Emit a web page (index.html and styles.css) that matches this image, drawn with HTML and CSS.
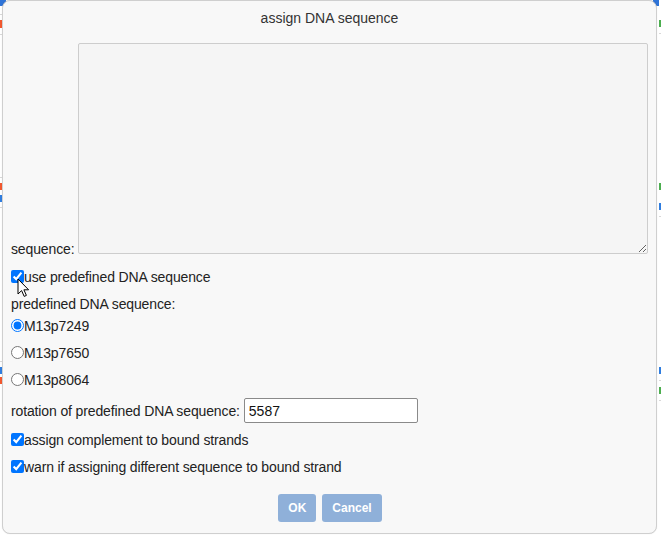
FILE: index.html
```html
<!DOCTYPE html>
<html>
<head>
<meta charset="utf-8">
<link rel="stylesheet" href="styles.css">
</head>
<body>
<div class="desk">
  <div class="bit gray-line" style="left:0;top:14px"></div>
  <div class="bit red" style="left:0;top:20px;height:8px"></div>
  <div class="bit gray-line" style="left:0;top:34px"></div>
  <div class="bit gray-line" style="left:0;top:177px"></div>
  <div class="bit red" style="left:0;top:183px;height:7px"></div>
  <div class="bit blue" style="left:0;top:195px;height:7px"></div>
  <div class="bit gray-line" style="left:0;top:207px"></div>
  <div class="bit gray-line" style="left:0;top:361px"></div>
  <div class="bit blue" style="left:0;top:367px;height:7px"></div>
  <div class="bit red" style="left:0;top:377px;height:7px"></div>
  <div class="bit green" style="right:0;top:20px;height:7px"></div>
  <div class="bit gray-line" style="right:0;top:33px"></div>
  <div class="bit green" style="right:0;top:183px;height:7px"></div>
  <div class="bit blue" style="right:0;top:203px;height:7px"></div>
  <div class="bit gray-line" style="right:0;top:216px"></div>
  <div class="bit blue" style="right:0;top:367px;height:7px"></div>
  <div class="bit gray-line" style="right:0;top:380px"></div>
  <div class="bit green" style="right:0;top:387px;height:7px"></div>
  <div class="bit gray-line" style="right:0;top:400px"></div>
  <div class="corner tl"></div>
  <div class="corner tr"></div>

  <div class="dialog">
    <div class="title">assign DNA sequence</div>
    <div class="seq-row">
      <label class="seq-label">sequence:</label>
      <textarea class="seq-area"></textarea>
    </div>
    <label class="row check-row first"><input type="checkbox" checked>use predefined DNA sequence</label>
    <div class="sub-label">predefined DNA sequence:</div>
    <label class="row radio-row"><input type="radio" name="seq" checked>M13p7249</label>
    <label class="row radio-row"><input type="radio" name="seq">M13p7650</label>
    <label class="row radio-row"><input type="radio" name="seq">M13p8064</label>
    <label class="row rot-row">rotation of predefined DNA sequence: <input class="rot-input" type="text" value="5587"></label>
    <label class="row check-row tight"><input type="checkbox" checked>assign complement to bound strands</label>
    <label class="row check-row"><input type="checkbox" checked>warn if assigning different sequence to bound strand</label>
    <div class="buttons">
      <button class="btn">OK</button>
      <button class="btn">Cancel</button>
    </div>
  </div>

  <svg class="cursor" width="14" height="20" viewBox="0 0 14 20">
    <path d="M1 1 L1 16 L4.6 12.6 L7.2 18.4 L9.4 17.4 L6.9 11.8 L11.6 11.8 Z" fill="#fff" stroke="#000" stroke-width="1" stroke-linejoin="round"/>
  </svg>
</div>
</body>
</html>
```

FILE: styles.css
```css
html, body {
  margin: 0;
  padding: 0;
  background: #fff;
}
.desk {
  position: relative;
  width: 661px;
  height: 536px;
  overflow: hidden;
  font-family: "Liberation Sans", Arial, sans-serif;
  font-size: 14px;
  color: #222;
}
.bit {
  position: absolute;
  width: 2px;
}
.gray-line { height: 1px; background: #d8d8d8; }
.red { background: #f2582e; }
.blue { background: #2f7ddf; }
.green { background: #4cae4f; }
.corner {
  position: absolute;
  top: 0;
  width: 6px;
  height: 6px;
  background: #2f74d8;
}
.corner.tl { left: 0; }
.corner.tr { right: 2px; }
.dialog {
  position: relative;
  margin-left: 2px;
  width: 637px;
  height: 532px;
  background: #f8f8f8;
  border: 1px solid #cfcfcf;
  border-radius: 8px;
  box-shadow: 0 0 1px rgba(0,0,0,0.15);
  padding: 0 8px;
  box-sizing: content-box;
  display: flex;
  flex-direction: column;
  align-items: flex-start;
  letter-spacing: -0.13px;
}
.title {
  align-self: stretch;
  text-align: center;
  padding-top: 7px;
  line-height: 20px;
  color: #333;
  letter-spacing: 0;
}
.seq-row {
  margin-top: 15px;
  display: flex;
  align-items: flex-end;
  gap: 4px;
}
.seq-label {
  line-height: 14px;
  margin-bottom: -2px;
}
.seq-area {
  display: block;
  margin: 0;
  width: 570px;
  height: 211px;
  box-sizing: border-box;
  border: 1px solid #cdcdcd;
  border-radius: 2px;
  background: #f5f5f5;
  resize: both;
}
.row {
  display: flex;
  align-items: center;
  height: 27px;
  white-space: nowrap;
}
.row input[type=checkbox], .row input[type=radio] {
  margin: 0;
  width: 13px;
  height: 13px;
}
.check-row.first {
  margin-top: 10px;
  height: 25px;
}
.sub-label {
  margin-top: 7px;
  line-height: 16px;
  height: 16px;
}
.radio-row { height: 27px; }
.rot-row {
  margin-top: 5px;
  height: 25px;
  gap: 4px;
}
.rot-input {
  box-sizing: border-box;
  width: 174px;
  height: 25px;
  margin: 0;
  padding: 1px 4px;
  border: 1px solid #8a8a8a;
  border-radius: 2px;
  background: #fff;
  font-family: "Liberation Sans", Arial, sans-serif;
  font-size: 14px;
  color: #111;
}
.check-row.tight { margin-top: 3px; }
.buttons {
  align-self: stretch;
  margin-top: 14px;
  display: flex;
  justify-content: center;
  gap: 6px;
  padding-left: 1px;
}
.btn {
  height: 28px;
  padding: 0 10px;
  border: none;
  border-radius: 3px;
  background: #8fb0d9;
  color: #fff;
  font-family: "Liberation Sans", Arial, sans-serif;
  font-weight: bold;
  font-size: 12px;
}
.cursor {
  position: absolute;
  left: 17px;
  top: 278px;
}
```
